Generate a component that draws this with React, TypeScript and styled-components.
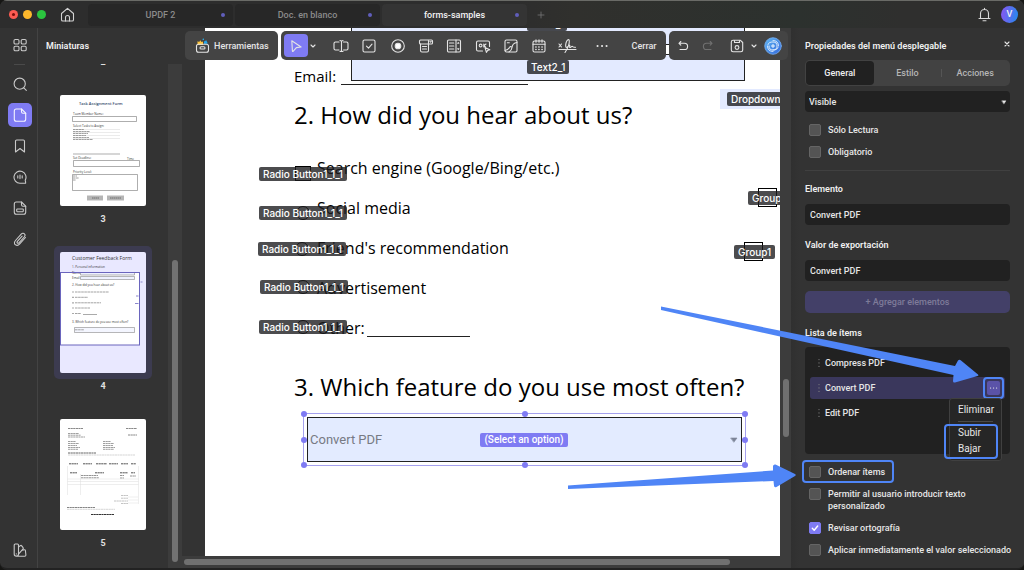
import React from 'react';
import styled, { createGlobalStyle, css } from 'styled-components';

const UI_FONT = `Roboto, 'Liberation Sans', sans-serif`;
const TAG_FONT = `Inter, 'Liberation Sans', sans-serif`;
const DOC_FONT = `'Open Sans', 'Noto Sans', sans-serif`;
const ACCENT = '#7f7bf3';
const MARKER = '#4f85f6';

const GlobalStyle = createGlobalStyle`
  *, *::before, *::after { box-sizing: border-box; }
  body { margin: 0; background: #161614; }
  button, input, select { font: inherit; color: inherit; margin: 0; padding: 0; border: 0; background: none; }
  button { cursor: pointer; }
  h1, h2, h3, p { margin: 0; font: inherit; }
  svg { display: block; flex: none; }
`;

const Window = styled.div`
  display: flex;
  flex-direction: column;
  height: 100vh;
  overflow: hidden;
  border-radius: 7px;
  border-bottom: 2px solid #222;
  background: #333;
  color: #e6e6e6;
  font: 500 9px/12px ${UI_FONT};
`;

/* ---------- icons ---------- */

const Icon = styled.svg.attrs({ 'aria-hidden': true })<{ $w?: number; $h?: number }>`
  width: ${p => p.$w ?? 16}px;
  height: ${p => p.$h ?? p.$w ?? 16}px;
  fill: none;
  stroke: currentColor;
  stroke-width: 1.1;
  stroke-linecap: round;
  stroke-linejoin: round;
`;

const ChevronDown = () => (
  <Icon $w={8} viewBox="0 0 8 8"><path d="M2 3l2 2 2-2" /></Icon>
);

/* ---------- tab bar ---------- */

const TitleBar = styled.header`
  display: flex;
  align-items: center;
  flex: none;
  height: 28px;
  padding: 1px 6px 0 9px;
  background: linear-gradient(90deg, #2d2d2d 0, #2d2d2d 50%, #30302d 56%, #2c312e 78%, #2f2f2e 88%);
  box-shadow: inset 0 1px 0 #6a6b67;
`;

const Lights = styled.div`
  display: flex;
  gap: 5px;
`;

const Light = styled.span<{ $color: string; $dot?: boolean }>`
  display: grid;
  place-items: center;
  width: 9px;
  height: 9px;
  border-radius: 50%;
  background: ${p => p.$color};
  ${p => p.$dot && css`
    &::after { content: ''; width: 3px; height: 3px; border-radius: 50%; background: #7a0f0c; }
  `}
`;

const HomeButton = styled.button`
  display: grid;
  place-items: center;
  width: 42px;
  height: 24px;
  color: #d2d2d2;
`;

const Tabs = styled.nav`
  display: flex;
  gap: 2px;
`;

const Tab = styled.button<{ $active?: boolean }>`
  display: grid;
  grid-template-columns: 12px 1fr 12px;
  align-items: center;
  width: 145px;
  height: 22px;
  border-radius: 4px;
  background: ${p => (p.$active ? '#343434' : '#272727')};
  color: ${p => (p.$active ? '#f2f2f2' : '#8b8b8b')};
`;

const UnsavedDot = styled.i`
  width: 4px;
  height: 4px;
  border-radius: 50%;
  background: #605ebb;
`;

const NewTab = styled.button`
  display: grid;
  place-items: center;
  width: 28px;
  height: 22px;
  color: #777;
`;

const TitleActions = styled.div`
  display: flex;
  align-items: center;
  gap: 10px;
  margin-left: auto;
  color: #d8d8d8;
`;

const IconButton = styled.button`
  display: grid;
  place-items: center;
`;

const Avatar = styled.button`
  width: 17px;
  height: 17px;
  border-radius: 50%;
  background: linear-gradient(100deg, #7d5cf0 15%, #2b86ee 90%);
  color: #f2f2f2;
  line-height: 17px;
`;

const Workspace = styled.div`
  display: flex;
  flex: 1;
  min-height: 0;
`;

/* ---------- left rail ---------- */

const Rail = styled.nav`
  display: flex;
  flex-direction: column;
  align-items: center;
  gap: 7px;
  flex: none;
  width: 38px;
  padding: 5px 0 6px 2px;
  border-right: 1px solid #434343;
`;

const RailButton = styled.button<{ $active?: boolean }>`
  display: grid;
  place-items: center;
  width: 24px;
  height: 24px;
  border-radius: 5px;
  background: ${p => (p.$active ? ACCENT : 'transparent')};
  color: ${p => (p.$active ? '#f4f4ff' : '#c9c9c9')};
  &:last-child { margin-top: auto; }
`;

const RailDivider = styled.hr`
  width: 11px;
  height: 1px;
  margin: 0;
  border: 0;
  background: #4a4a4a;
`;

/* ---------- thumbnails ---------- */

const Thumbnails = styled.aside`
  display: flex;
  flex-direction: column;
  flex: none;
  width: 144px;
`;

const ThumbTitle = styled.h2`
  height: 36px;
  padding: 12px 8px;
  font-weight: 600;
  color: #f0f0f0;
`;

const ThumbScroller = styled.div`
  display: flex;
  flex: 1;
  min-height: 0;
`;

const ThumbList = styled.div`
  display: flex;
  flex-direction: column;
  align-items: center;
  gap: 21px;
  flex: 1;
  overflow: hidden;
`;

const ThumbItem = styled.figure`
  display: flex;
  flex-direction: column;
  align-items: center;
  gap: 1px;
  margin: 0;
  &:first-child { margin-top: -8px; }
`;

const ThumbFrame = styled.button<{ $active?: boolean }>`
  padding: 6px;
  border-radius: 5px;
  background: ${p => (p.$active ? '#3c3b50' : 'transparent')};
`;

const ThumbSheet = styled.svg<{ $h: number; $tint?: boolean }>`
  width: 86px;
  height: ${p => p.$h}px;
  border-radius: 2px;
  background: ${p => (p.$tint ? '#e9e8ff' : '#fff')};
`;

const Caption = styled.figcaption`
  font-weight: 700;
  color: #e0e0e0;
`;

const Track = styled.div<{ $horizontal?: boolean }>`
  flex: none;
  display: flex;
  align-items: center;
  background: #3c3c3c;
  ${p => p.$horizontal
    ? css`height: 12px; padding-left: 2px;`
    : css`flex-direction: column;`}
`;

const ThumbTrack = styled(Track)`
  width: 14px;
`;

const ThumbHandle = styled.i`
  width: 6px;
  height: 60%;
  margin-top: 196px;
  border-radius: 3px;
  background: #727272;
`;

/* ---------- canvas ---------- */

const Canvas = styled.main`
  position: relative;
  display: flex;
  flex-direction: column;
  flex: 1;
  min-width: 0;
`;

const CanvasRow = styled.div`
  display: flex;
  flex: 1;
  min-height: 0;
  padding-left: 23px;
`;

const CanvasTrack = styled(Track)`
  width: 11px;
`;

const CanvasHandleY = styled.i`
  width: 6px;
  height: 58px;
  margin-top: 351px;
  border-radius: 3px;
  background: #707070;
`;

const CanvasHandleX = styled.i`
  width: 90%;
  height: 6px;
  border-radius: 3px;
  background: #707070;
`;

const Toolbar = styled.div`
  position: absolute;
  top: 3px;
  left: 3px;
  right: 3px;
  display: flex;
  gap: 3px;
  z-index: 1;
`;

const ToolGroup = styled.div<{ $grow?: boolean }>`
  display: flex;
  align-items: center;
  flex: ${p => (p.$grow ? '1' : 'none')};
  min-width: 0;
  height: 29px;
  border-radius: 5px;
  background: #444;
  color: #e4e4e4;
  padding-left: ${p => (p.$grow ? 3 : 0)}px;
`;

const ToolsMenu = styled.button`
  display: flex;
  align-items: center;
  gap: 4px;
  width: 93px;
  height: 28px;
  padding-left: 10px;
`;

const Tool = styled.button<{ $w?: number; $active?: boolean; $dim?: boolean }>`
  display: grid;
  place-items: center;
  flex: none;
  width: ${p => p.$w ?? 24}px;
  height: 23px;
  border-radius: 4px;
  background: ${p => (p.$active ? ACCENT : 'transparent')};
  color: ${p => (p.$dim ? '#707070' : 'inherit')};
`;

const FieldTools = styled.div`
  display: grid;
  grid-template-columns: repeat(9, 1fr);
  flex: 1;
  margin-left: 9px;
`;

const FieldTool = styled.button`
  display: grid;
  place-items: center;
  height: 23px;
`;

const SaveTools = styled.div`
  display: flex;
  align-items: center;
  margin-left: 8px;
  margin-right: 3px;
`;

/* ---------- document ---------- */

const Page = styled.article`
  position: relative;
  flex: 1;
  min-width: 0;
  overflow: hidden;
  background: #fff;
  color: #000;
  padding-left: 89px;
  font: 400 16px/40px ${DOC_FONT};
  white-space: nowrap;
`;

const EmailLine = styled.p`
  display: flex;
  align-items: flex-end;
  gap: 5px;
  height: 61px;
  padding-bottom: 3px;
  font-size: 15px;
  line-height: 20px;
`;

const Question = styled.h2`
  font-size: 24px;
  line-height: 32px;
  padding: 10px 0;
`;

const Answers = styled.div`
  padding: 7px 0 13px 23px;
`;

const Answer = styled.p`
  display: flex;
  gap: 2px;
`;

const Blank = styled.span<{ $w: number; $drop: number }>`
  width: ${p => p.$w}px;
  height: 1px;
  align-self: flex-end;
  margin-bottom: ${p => p.$drop}px;
  background: #222;
`;

const FormField = styled.span<{ $x: number; $y: number; $w: number; $h: number; $border?: boolean }>`
  position: absolute;
  left: ${p => p.$x}px;
  top: ${p => p.$y}px;
  width: ${p => p.$w}px;
  height: ${p => p.$h}px;
  background: #e3eaff;
  border: ${p => (p.$border ? '1px solid #222' : '0')};
`;

const Mark = styled.span<{ $x: number; $y: number; $round?: boolean; $w: number; $h: number }>`
  position: absolute;
  left: ${p => p.$x}px;
  top: ${p => p.$y}px;
  width: ${p => p.$w}px;
  height: ${p => p.$h}px;
  border: 1px solid #000;
  border-radius: ${p => (p.$round ? '50%' : '0')};
`;

const FieldTag = styled.span<{ $x: number; $y: number }>`
  position: absolute;
  left: ${p => p.$x}px;
  top: ${p => p.$y}px;
  padding: 0 4px;
  border-radius: 2px;
  background: rgba(28, 28, 30, 0.79);
  color: #fff;
  font: 500 10px/14px ${TAG_FONT};
`;

const Selection = styled.div`
  position: relative;
  width: 443px;
  margin-left: 9px;
  padding: 3px;
  border: 1px solid #a5a1ee;
`;

const Handle = styled.i<{ $h: 0 | 50 | 100; $v: 0 | 50 | 100 }>`
  position: absolute;
  left: ${p => p.$h}%;
  top: ${p => p.$v}%;
  width: 6px;
  height: 6px;
  margin: -3px;
  border-radius: 50%;
  background: ${ACCENT};
`;

const Dropdown = styled.div`
  display: grid;
  grid-template-columns: 1fr auto 1fr;
  align-items: center;
  height: 45px;
  padding: 0 3px 0 2px;
  border: 1px solid #222;
  background: #e3ebff;
  color: #777a84;
  font: 400 13px/20px ${UI_FONT};
  & > svg { justify-self: end; }
`;

const FieldName = styled.span`
  padding: 0 4px;
  border-radius: 2px;
  background: ${ACCENT};
  color: #fff;
  font: 500 10px/14px ${UI_FONT};
`;

/* ---------- properties panel ---------- */

const Panel = styled.aside`
  position: relative;
  z-index: 2;
  flex: none;
  width: 233px;
  padding: 0 14px;
  background: linear-gradient(90deg, #303030, #333 8px);
`;

const PanelHeader = styled.div`
  display: flex;
  justify-content: space-between;
  align-items: center;
  height: 32px;
  padding-top: 3px;
`;

const PanelTitle = styled.h2`
  font-weight: 600;
  color: #f0f0f0;
`;

const CloseButton = styled.button`
  padding: 0 0 4px;
  margin-right: -1px;
`;

const Segments = styled.div`
  display: grid;
  grid-template-columns: repeat(3, 1fr);
  height: 26px;
  padding: 1px;
  border-radius: 5px;
  background: #424242;
`;

const Segment = styled.button<{ $active?: boolean; $divided?: boolean }>`
  position: relative;
  border-radius: 4px;
  background: ${p => (p.$active ? '#212121' : 'transparent')};
  color: ${p => (p.$active ? '#f0f0f0' : '#b5b5b5')};
  ${p => p.$divided && css`
    &::before { content: ''; position: absolute; left: 0; top: 8px; bottom: 8px; width: 1px; background: #555; }
  `}
`;

const SelectWrap = styled.label`
  display: flex;
  align-items: center;
  margin: 5px 0 7px;
  padding-right: 3px;
  border-radius: 4px;
  background: #212121;
`;

const Select = styled.select`
  appearance: none;
  flex: 1;
  height: 21px;
  padding-left: 4px;
  outline: none;
`;

const CheckRow = styled.label`
  position: relative;
  display: flex;
  align-items: flex-start;
  gap: 7px;
  margin-right: -8px;
  padding: 5px 0 5px 4px;
`;

const CheckText = styled.span`
  padding-right: 6px;
`;

const Check = styled.input.attrs({ type: 'checkbox' })`
  appearance: none;
  flex: none;
  width: 12px;
  height: 12px;
  border-radius: 2px;
  border: 1px solid #656565;
  background: #545454;
  &:checked {
    border-color: ${ACCENT};
    background: ${ACCENT};
  }
`;

const Tick = styled(Icon)`
  position: absolute;
  left: 6px;
  top: 7px;
  color: #fff;
  stroke-width: 1.4;
`;

const PanelDivider = styled.hr`
  height: 1px;
  margin: 7px 0 10px;
  border: 0;
  background: #404040;
`;

const Label = styled.label`
  display: block;
  padding: 2px 0 9px;
  font-weight: 600;
  color: #f0f0f0;
`;

const TextInput = styled.input`
  width: 100%;
  height: 21px;
  margin-bottom: 12px;
  padding: 0 5px;
  border-radius: 4px;
  background: #212121;
`;

const AddButton = styled.button`
  width: 100%;
  height: 22px;
  margin: -2px 0 12px;
  border-radius: 5px;
  background: #434068;
  color: #7e7b99;
`;

const ItemList = styled.div`
  display: flex;
  flex-direction: column;
  gap: 3px;
  min-height: 107px;
  margin: -1px 0 7px;
  padding: 5px;
  border-radius: 4px;
  background: #212121;
`;

const Item = styled.div<{ $active?: boolean }>`
  position: relative;
  display: flex;
  align-items: center;
  gap: 4px;
  height: 22px;
  padding: 0 5px 0 7px;
  border-radius: 3px;
  background: ${p => (p.$active ? '#3a375c' : 'transparent')};
`;

const MoreButton = styled.button`
  position: relative;
  display: grid;
  place-items: center;
  width: 13px;
  height: 14px;
  margin-left: auto;
  border-radius: 2px;
  background: #5b53a8;
`;

const Menu = styled.div`
  position: absolute;
  top: 21px;
  right: 3px;
  width: 53px;
  padding: 3px 0;
  border: 1px solid #404040;
  border-radius: 3px;
  background: #262626;
  font-size: 10px;
  font-weight: 400;
`;

const MenuItem = styled.button`
  display: block;
  width: 100%;
  height: 16px;
  padding-left: 8px;
  text-align: left;
`;

const MenuDivider = styled.hr`
  height: 1px;
  margin: 3px 8px;
  border: 0;
  background: #4a4a4a;
`;

const MenuGroup = styled.div`
  position: relative;
`;

const Highlight = styled.span<{ $inset: string }>`
  position: absolute;
  inset: ${p => p.$inset};
  border: 2px solid ${MARKER};
  border-radius: 4px;
  pointer-events: none;
`;

const MenuArrow = styled.svg`
  position: absolute;
  top: -77px;
  right: 24px;
  width: 325px;
  height: 85px;
  fill: ${MARKER};
  pointer-events: none;
`;

const SortArrow = styled.svg`
  position: absolute;
  top: -1px;
  left: -240px;
  width: 235px;
  height: 30px;
  fill: ${MARKER};
  pointer-events: none;
`;

/* ---------- thumbnail drawings ---------- */

const Sheet3 = () => (
  <ThumbSheet $h={111} viewBox="0 0 86 111" fontFamily="Open Sans, sans-serif">
    <text x="19" y="10" fontSize="4" fontWeight="600" fill="#33486b">Task Assignment Form</text>
    <g fontSize="3" fill="#333">
      <text x="13" y="20">Team Member Name:</text>
      <text x="13" y="32">Select Tasks to Assign:</text>
      <text x="13" y="64">Set Deadline:</text>
      <text x="67" y="65">Time</text>
      <text x="13" y="78">Priority Level:</text>
    </g>
    <g stroke="#777" strokeWidth=".6" fill="none">
      <path d="M12.5 21.5h64v5h-64zM13.500 65.500h66v6h-66zM12.500 79.500h65v16h-65zM13 59h47" />
      <path d="M13 34.500h47M13 37.500h47M13 40.500h47M13 43.500h47" stroke="#ddd" />
    </g>
    <path d="M13 34.500h11M13 36.500h17M13 38.500h15M13 40.500h13M13 42.500h16M13 44.500h20M13 81h4M13 83h6M13 85h3" stroke="#888" strokeWidth=".8" strokeDasharray="2.400 .4" />
    <path d="M27 100.500h16v5H27zM47 100.500h17v5H47z" fill="#b5b5b5" />
    <path d="M32 103h7M50 103h11" stroke="#666" strokeWidth=".9" strokeDasharray="1.500 .4" />
  </ThumbSheet>
);

const Sheet4 = () => (
  <ThumbSheet $h={121} $tint viewBox="0 0 86 121" fontFamily="Open Sans, sans-serif">
    <text x="12" y="8" fontSize="5" fill="#333">Customer Feedback Form</text>
    <rect x="0" y="20" width="79.500" height="73" fill="#fff" />
    <g fontSize="3" fill="#333">
      <text x="12" y="16">1. Personal information</text>
      <text x="12" y="22">Name:</text>
      <text x="12" y="27">Email:</text>
      <text x="12" y="33.500">2. How did you hear about us?</text>
      <text x="12" y="71">3. Which feature do you use most often?</text>
    </g>
    <g stroke="#888" strokeWidth=".6" fill="#eef1ff">
      <path d="M20.500 20.500h54v2.500h-54zM20.500 24.500h54v3h-54z" />
      <path d="M14.500 75.500h60v5h-60z" fill="#f4f6ff" />
    </g>
    <path d="M15 40h34M15 45.300h13M15 50.800h26M15 56h15M15 61.500h6M15 77.800h9" stroke="#999" strokeWidth=".9" strokeDasharray="2.600 .5" />
    <path d="M12.500 40h1M12.500 45.300h1M12.500 50.800h1M12.500 56h1M12.500 61.500h1" stroke="#555" strokeWidth="1.200" />
    <path d="M23 62.500h14" stroke="#555" strokeWidth=".5" />
    <path d="M76 44h2.500M75 51.500h3.500M80.500 30h2" stroke="#8a86cc" strokeWidth="1.200" />
    <rect x=".5" y="20.500" width="79" height="72.500" fill="none" stroke="#6a65bd" />
  </ThumbSheet>
);

const Sheet5 = () => (
  <ThumbSheet $h={111} viewBox="0 0 86 111">
    <g stroke="#888" fill="none" strokeDasharray="2.200 .4">
      <path d="M8 9.500h15M66 9.500h11M68 16h9" strokeWidth="1" />
      <path d="M8 14.500h11M8 16.200h13M8 18h17M8 22.500h8M8 24.500h11M8 26.500h9M8 28.500h12M8 30.300h10M43 22.500h8M43 24.500h11M43 26.500h10M43 28.500h12M43 30.300h11" strokeWidth=".8" />
      <path d="M8 34h28" stroke="#555" strokeWidth=".9" />
      <path d="M8 36h67" stroke="#bbb" strokeWidth=".6" />
      <path d="M9 44.800h9M23 44.800h9M36 44.800h11M49 44.800h9M61 44.800h7M71 44.800h5M10 53.800h7M35 53.800h9M60 53.800h8M71 53.800h4" stroke="#555" strokeWidth="1" />
      <path d="M21 56.500h17M21 58.800h18M60 56.500h4M60 59h4M70 57h6" strokeWidth=".9" />
      <path d="M61 76.500h7M61 79.200h7M54 82h14M61 84.500h7" stroke="#aaa" strokeWidth=".7" />
      <path d="M7 88.500h28" stroke="#666" strokeWidth=".8" />
      <path d="M7 90.300h48" stroke="#bbb" strokeWidth=".6" />
      <path d="M31 95.500h23" stroke="#333" strokeWidth="1.100" />
    </g>
    <path d="M7.500 47v29M78.500 47v38M20.500 55v21M7.500 60h71M7.500 62.500h71M7.500 65.500h71M68 78h10M68 81h10M68 84h10" stroke="#ddd" strokeWidth=".5" fill="none" />
  </ThumbSheet>
);

const answers = ['Search engine (Google/Bing/etc.)', 'Social media', "Friend's recommendation", 'Advertisement', 'Other:'];

const radioMarks = [
  { x: 90, y: 138, w: 16, h: 15, round: false },
  { x: 91, y: 178, w: 14, h: 14, round: true },
  { x: 90, y: 214, w: 14, h: 14, round: true },
  { x: 91, y: 252, w: 14, h: 14, round: true },
  { x: 91, y: 292, w: 14, h: 14, round: true },
];

const radioTags = [
  { x: 54, y: 139 },
  { x: 54, y: 178 },
  { x: 53, y: 214 },
  { x: 55, y: 252 },
  { x: 54, y: 292 },
];

const Grip = () => (
  <Icon $w={4} $h={10} viewBox="0 0 4 10">
    <path d="M2 1.500v.1M2 4.900v.1M2 8.400v.1" stroke="#858585" />
  </Icon>
);

export default function App() {
  return (
    <>
      <GlobalStyle />
      <Window>
        <TitleBar>
          <Lights>
            <Light $color="#fc5b52" $dot />
            <Light $color="#fdb82c" />
            <Light $color="#2bc53f" />
          </Lights>
          <HomeButton aria-label="Inicio">
            <Icon $w={15} viewBox="0 0 15 15">
              <path d="M1.500 6.500L7.500 1.300l6 5.200v6.200q0 1.300-1.300 1.300H2.800q-1.300 0-1.300-1.300z" />
              <path d="M5.500 14v-3.500a2 2 0 014 0V14" />
            </Icon>
          </HomeButton>
          <Tabs>
            <Tab><span /><span>UPDF 2</span><UnsavedDot /></Tab>
            <Tab><span /><span>Doc. en blanco</span><UnsavedDot /></Tab>
            <Tab $active><span /><span>forms-samples</span><UnsavedDot /></Tab>
          </Tabs>
          <NewTab aria-label="Nueva pestaña">
            <Icon $w={8} viewBox="0 0 8 8"><path d="M4 1v6M1 4h6" strokeWidth=".8" /></Icon>
          </NewTab>
          <TitleActions>
            <IconButton aria-label="Notificaciones">
              <Icon $w={13} $h={15} viewBox="0 0 13 15">
                <path d="M2.500 11V6.500a4 4 0 018 0V11M1 11.500h11M5 13.700h3M6.500 2.500V1.200" />
              </Icon>
            </IconButton>
            <Avatar>V</Avatar>
          </TitleActions>
        </TitleBar>

        <Workspace>
          <Rail>
            <RailButton aria-label="Paneles">
              <Icon $w={14} viewBox="0 0 14 14">
                <rect x="1" y="1.500" width="5" height="4.500" rx="1.300" /><rect x="8.200" y="1.500" width="5" height="4.500" rx="1.300" />
                <rect x="1" y="8.200" width="5" height="4.500" rx="1.300" /><rect x="8.200" y="8.200" width="5" height="4.500" rx="1.300" />
              </Icon>
            </RailButton>
            <RailDivider />
            <RailButton aria-label="Buscar">
              <Icon $w={14} viewBox="0 0 14 14"><circle cx="6.700" cy="6.700" r="5.600" /><path d="M10.800 10.800l2.500 2.500" /></Icon>
            </RailButton>
            <RailButton $active aria-label="Miniaturas">
              <Icon $w={14} viewBox="0 0 14 14">
                <path d="M3.300 1h5.200l4.200 4.200v6q0 2-2 2H3.300q-2 0-2-2V3q0-2 2-2z" /><path d="M8.500 1v2.700q0 1.500 1.500 1.500h2.700" />
              </Icon>
            </RailButton>
            <RailButton aria-label="Marcadores">
              <Icon $w={14} viewBox="0 0 14 14"><path d="M2.500 13V2.200Q2.500 1 3.700 1h6.600q1.200 0 1.200 1.200V13L7 9.500z" /></Icon>
            </RailButton>
            <RailButton aria-label="Comentarios">
              <Icon $w={14} viewBox="0 0 14 14">
                <path d="M12.200 10.200A6 6 0 107 13.200h5.600v-1.400z" /><path d="M4.800 5.700v2.200M7 5v3.600M9.200 5.700v2.200" />
              </Icon>
            </RailButton>
            <RailButton aria-label="Documento">
              <Icon $w={14} viewBox="0 0 14 14">
                <path d="M3.300 1h5.200l4.200 4.200v6q0 2-2 2H3.300q-2 0-2-2V3q0-2 2-2z" /><path d="M8.500 1v2.700q0 1.500 1.500 1.500h2.700" /><rect x="3.700" y="8" width="6.600" height="2.700" rx=".6" />
              </Icon>
            </RailButton>
            <RailButton aria-label="Adjuntos">
              <Icon $w={14} viewBox="0 0 14 14">
                <path d="M12.500 5.500l-6 6.600c-1.400 1.500-3.300 1.600-4.300.6-1.100-1-1-2.800.3-4.200l5.700-6.300c1-1.100 2.400-1.200 3.200-.4.800.8.800 2.100-.2 3.200l-5.300 5.800c-.5.600-1.200.6-1.600.2-.4-.4-.4-1 .1-1.600l4.700-5.200" />
              </Icon>
            </RailButton>
            <RailButton aria-label="Temas">
              <Icon $w={14} viewBox="0 0 14 14">
                <path d="M1.200 2q0-1 1-1h2.300q1 0 1 1v9a2.100 2.100 0 01-4.300 0zM5.500 4.200l1.800-1.500q.8-.6 1.400.1l1.400 1.900q.5.800-.2 1.500l-4.400 5M9.500 7.200l1.800-.4q.9-.2 1.100.7l.5 4.500q0 1.200-1.200 1.200H3.400M3.300 10.800v.2" />
              </Icon>
            </RailButton>
          </Rail>

          <Thumbnails>
            <ThumbTitle>Miniaturas</ThumbTitle>
            <ThumbScroller>
              <ThumbList>
                <ThumbItem><Caption>2</Caption></ThumbItem>
                <ThumbItem><ThumbFrame aria-label="Página 3"><Sheet3 /></ThumbFrame><Caption>3</Caption></ThumbItem>
                <ThumbItem><ThumbFrame $active aria-label="Página 4"><Sheet4 /></ThumbFrame><Caption>4</Caption></ThumbItem>
                <ThumbItem><ThumbFrame aria-label="Página 5"><Sheet5 /></ThumbFrame><Caption>5</Caption></ThumbItem>
              </ThumbList>
              <ThumbTrack><ThumbHandle /></ThumbTrack>
            </ThumbScroller>
          </Thumbnails>

          <Canvas>
            <Toolbar>
              <ToolGroup>
                <ToolsMenu>
                  <Icon $w={15} viewBox="0 0 15 15">
                    <path d="M2.500 7V3.200l1.700.8 1-1.800L6.500 4 8 3.500V7z" fill="#ffc53a" stroke="none" />
                    <path d="M9 6V3.500l2.300-1.300 1.500 3.300z" fill="#25a5e8" stroke="none" />
                    <circle cx="8.300" cy="1.200" r=".8" fill="#2bb5f2" stroke="none" />
                    <rect x="1.500" y="6.300" width="12" height="8" rx="2" />
                    <rect x="5" y="8.800" width="5" height="2.200" rx="1.100" />
                  </Icon>
                  Herramientas
                </ToolsMenu>
              </ToolGroup>

              <ToolGroup $grow>
                <Tool $active aria-label="Seleccionar">
                  <Icon $w={14} viewBox="0 0 14 14"><path d="M2.800 1.800l9.300 6.200-4.700.6-3.100 3.600q-.8.800-.9-.3z" /></Icon>
                </Tool>
                <Tool $w={10} aria-label="Más selección"><ChevronDown /></Tool>
                <FieldTools>
                  <FieldTool aria-label="Campo de texto">
                    <Icon viewBox="0 0 16 16"><path d="M6 12H2.500Q1 12 1 10.500v-5Q1 4 2.500 4H6M10.500 4h3Q15 4 15 5.500v5q0 1.500-1.500 1.500h-3M8.500 3v10M7 2.500q1.500 0 1.500 1 0-1 1.500-1M7 13.500q1.500 0 1.500-1 0 1 1.500 1" /></Icon>
                  </FieldTool>
                  <FieldTool aria-label="Casilla">
                    <Icon viewBox="0 0 16 16"><rect x="2" y="2" width="12" height="12" rx="1.500" /><path d="M5.500 8.200l2 2 3.500-4" /></Icon>
                  </FieldTool>
                  <FieldTool aria-label="Botón de opción">
                    <Icon viewBox="0 0 16 16"><circle cx="8" cy="8" r="6.300" /><circle cx="8" cy="8" r="2.800" fill="#fff" /></Icon>
                  </FieldTool>
                  <FieldTool aria-label="Menú desplegable">
                    <Icon viewBox="0 0 16 16"><rect x="1.500" y="2" width="13" height="4" rx="1" /><path d="M10.500 2.500v3M12 3.500l.6.700.6-.7M2.500 6v6.500q0 1.500 1.500 1.500h5q1.500 0 1.500-1.500V6M4.500 8.500h4M4.500 11h4" /></Icon>
                  </FieldTool>
                  <FieldTool aria-label="Cuadro de lista">
                    <Icon viewBox="0 0 16 16"><rect x="1.500" y="2" width="13" height="12" rx="1.200" /><path d="M10 2v12M3.500 5h4.300M3.500 8h4.300M3.500 11h4.300M11.800 5.300l.5-.7.5.7M11.800 10.700l.5.700.5-.7" /></Icon>
                  </FieldTool>
                  <FieldTool aria-label="Botón">
                    <Icon viewBox="0 0 16 16"><path d="M7.500 13H3q-1.500 0-1.500-1.500v-7Q1.500 3 3 3h10q1.500 0 1.500 1.500v4" /><circle cx="5.600" cy="7.500" r="1.400" /><path d="M8.800 6v3M11 6L9 7.600l1.500 1.300M10 9.500l4.800 2.300-2.200.6-1.200 2z" /></Icon>
                  </FieldTool>
                  <FieldTool aria-label="Imagen">
                    <Icon viewBox="0 0 16 16"><rect x="2" y="2" width="12" height="12" rx="1.500" /><path d="M2 12.500q3-.5 4.500-3 .8-1.500 2-.6M14 4.500q-4.500.5-5 5-.3 3-3 4.500M4.300 4.800h2" /></Icon>
                  </FieldTool>
                  <FieldTool aria-label="Fecha">
                    <Icon viewBox="0 0 16 16"><rect x="2" y="3" width="12" height="11" rx="1.500" /><path d="M2 6.300h12M5 1.800v2.400M8 1.800v2.400M11 1.800v2.400" /><path d="M4.800 9h.3M7.800 9h.3M10.900 9h.3M4.800 11.500h.3M7.800 11.500h.3M10.900 11.500h.3" strokeWidth="1.400" /></Icon>
                  </FieldTool>
                  <FieldTool aria-label="Firma">
                    <Icon $w={19} $h={16} viewBox="0 0 19 16"><path d="M1 6l2.500 3M3.500 6L1 9M1 11.500h17M7 14.500c2-3 4.500-8 4.300-11.500C11.200.5 9 1.500 8 5c-.8 3.300-.3 5 1.200 4.200 1-.6 2-2.400 2.600-1.800.5.500-.8 2.200.2 2.100 1 0 1.300-1.300 2.200-1.300.7 0 .1 1.400 3.300 1" /></Icon>
                  </FieldTool>
                </FieldTools>
                <Tool $w={40} aria-label="Más">
                  <Icon $w={14} viewBox="0 0 14 14"><path d="M2.500 7h.1M7 7h.1M11.500 7h.1" strokeWidth="2" /></Icon>
                </Tool>
                <Tool $w={44}>Cerrar</Tool>
              </ToolGroup>

              <ToolGroup>
                <Tool $w={28} aria-label="Deshacer">
                  <Icon $w={12} viewBox="0 0 12 12"><path d="M3.800 1.500L2 3.300l1.800 1.800M2 3.300h5.500a2.700 2.700 0 010 6.200H3" /></Icon>
                </Tool>
                <Tool $w={22} $dim aria-label="Rehacer">
                  <Icon $w={12} viewBox="0 0 12 12"><path d="M8.200 1.500L10 3.300 8.200 5.100M10 3.300H4.500a2.700 2.700 0 000 6.200H9" /></Icon>
                </Tool>
                <SaveTools>
                  <Tool $w={20} aria-label="Guardar">
                    <Icon $w={14} viewBox="0 0 14 14"><path d="M3 1.300h7.500l2.200 2.200V11q0 1.700-1.700 1.700H3Q1.300 12.700 1.300 11V3Q1.300 1.300 3 1.300z" /><path d="M4.500 1.500v2h5v-2" /><circle cx="7" cy="8.500" r="1.900" /></Icon>
                  </Tool>
                  <Tool $w={14} aria-label="Más opciones de guardado"><ChevronDown /></Tool>
                  <Tool aria-label="Asistente de IA">
                    <Icon $w={18} viewBox="0 0 18 18">
                      <defs><linearGradient id="ai" x1="0" y1="0" x2="1" y2="1"><stop offset="0" stopColor="#62b8f2" /><stop offset="1" stopColor="#3266dc" /></linearGradient></defs>
                      <circle cx="9" cy="9" r="8.300" fill="url(#ai)" stroke="#77aef2" strokeWidth=".8" />
                      <path d="M9 3.500c3.500 0 5.500 2 5.500 5.500M9 14.500c-3.500 0-5.500-2-5.500-5.500M4 7.500C4.500 5.500 6.500 5 9 5c3 0 4 1.500 4 4s-1 4-4 4-4-1.500-4-4M14 10.500c-.5 2-2.500 2.500-5 2.500" stroke="#e6f2ff" strokeWidth=".9" />
                      <path d="M9 7.400v3.200M7.400 9h3.200" stroke="#fff" strokeWidth=".9" />
                    </Icon>
                  </Tool>
                </SaveTools>
              </ToolGroup>
            </Toolbar>

            <CanvasRow>
              <Page>
                <FormField $x={146} $y={-4} $w={394} $h={21} $border />
                <FormField $x={146} $y={26} $w={394} $h={27} $border />
                <FieldTag $x={322} $y={-11}>Text1_1</FieldTag>
                <FieldTag $x={322} $y={32}>Text2_1</FieldTag>
                <FormField $x={515} $y={61} $w={80} $h={20} />

                <EmailLine>Email: <Blank $w={187} $drop={1} /></EmailLine>
                <Question>2. How did you hear about us?</Question>
                <Answers>
                  {answers.map(text => (
                    <Answer key={text}>{text}{text === 'Other:' && <Blank $w={103} $drop={11} />}</Answer>
                  ))}
                </Answers>
                <Question>3. Which feature do you use most often?</Question>

                <Selection>
                  <Dropdown>
                    Convert PDF
                    <FieldName>(Select an option)</FieldName>
                    <Icon $w={8} $h={6} viewBox="0 0 8 6"><path d="M1 1h6L4 5z" fill="#7c8497" stroke="#7c8497" strokeWidth=".6" /></Icon>
                  </Dropdown>
                  <Handle $h={0} $v={0} /><Handle $h={50} $v={0} /><Handle $h={100} $v={0} />
                  <Handle $h={0} $v={50} /><Handle $h={100} $v={50} />
                  <Handle $h={0} $v={100} /><Handle $h={50} $v={100} /><Handle $h={100} $v={100} />
                </Selection>

                {radioMarks.map((m, i) => <Mark key={i} $x={m.x} $y={m.y} $w={m.w} $h={m.h} $round={m.round} />)}
                <Mark $x={553} $y={160} $w={19} $h={19} />
                <Mark $x={539} $y={214} $w={19} $h={19} />
                {radioTags.map((t, i) => <FieldTag key={i} $x={t.x} $y={t.y}>Radio Button1_1_1</FieldTag>)}
                <FieldTag $x={522} $y={64}>Dropdown1</FieldTag>
                <FieldTag $x={543} $y={163}>Group1</FieldTag>
                <FieldTag $x={529} $y={217}>Group1</FieldTag>
              </Page>
              <CanvasTrack><CanvasHandleY /></CanvasTrack>
            </CanvasRow>
            <Track $horizontal><CanvasHandleX /></Track>
          </Canvas>

          <Panel>
            <PanelHeader>
              <PanelTitle>Propiedades del menú desplegable</PanelTitle>
              <CloseButton aria-label="Cerrar panel">
                <Icon $w={8} viewBox="0 0 8 8"><path d="M2 2l4 4M6 2L2 6" /></Icon>
              </CloseButton>
            </PanelHeader>
            <Segments>
              <Segment $active>General</Segment>
              <Segment>Estilo</Segment>
              <Segment $divided>Acciones</Segment>
            </Segments>
            <SelectWrap>
              <Select aria-label="Visibilidad"><option>Visible</option></Select>
              <Icon $w={6} viewBox="0 0 6 6"><path d="M1 1.800h4L3 4.800z" fill="#eee" strokeWidth=".4" /></Icon>
            </SelectWrap>
            <CheckRow><Check /><CheckText>Sólo Lectura</CheckText></CheckRow>
            <CheckRow><Check /><CheckText>Obligatorio</CheckText></CheckRow>
            <PanelDivider />
            <Label htmlFor="item">Elemento</Label>
            <TextInput id="item" defaultValue="Convert PDF" />
            <Label htmlFor="export">Valor de exportación</Label>
            <TextInput id="export" defaultValue="Convert PDF" />
            <AddButton>+ Agregar elementos</AddButton>
            <Label as="h3">Lista de ítems</Label>
            <ItemList>
              <Item><Grip />Compress PDF</Item>
              <Item $active>
                <Grip />Convert PDF
                <MoreButton aria-label="Opciones del ítem">
                  <Icon $w={9} $h={4} viewBox="0 0 9 4"><path d="M1.500 2h.1M4.500 2h.1M7.500 2h.1" stroke="#eee" strokeWidth="1.200" /></Icon>
                  <Highlight $inset="-4px" />
                </MoreButton>
                <Menu>
                  <MenuItem>Eliminar</MenuItem>
                  <MenuDivider />
                  <MenuGroup>
                    <MenuItem>Subir</MenuItem>
                    <MenuItem>Bajar</MenuItem>
                    <Highlight $inset="-1px 3px -2px -6px" />
                  </MenuGroup>
                </Menu>
                <MenuArrow viewBox="0 0 325 85">
                  <path d="M5 6.500L299 66l3-5.500q1.500-1.500 3 0l17 14q1 1-.5 1.500L299 82.500q-2 .5-2-1.500l.5-6L5 10z" />
                </MenuArrow>
              </Item>
              <Item><Grip />Edit PDF</Item>
            </ItemList>
            <CheckRow>
              <Check /><CheckText>Ordenar ítems</CheckText>
              <Highlight $inset="-1px 124px 0 -3px" />
              <SortArrow viewBox="0 0 235 30">
                <path d="M3 25.500L208 10.500V6q.5-2 2.500-1.500L230 14q1.500 1 0 2l-18.500 11q-2.500 1-2.500-1.500L208.500 21 3 29z" />
              </SortArrow>
            </CheckRow>
            <CheckRow><Check /><CheckText>Permitir al usuario introducir texto personalizado</CheckText></CheckRow>
            <CheckRow>
              <Check defaultChecked /><CheckText>Revisar ortografía</CheckText>
              <Tick $w={8} viewBox="0 0 8 8"><path d="M1.300 4.300l1.900 2L6.700 2" /></Tick>
            </CheckRow>
            <CheckRow><Check /><CheckText>Aplicar inmediatamente el valor seleccionado</CheckText></CheckRow>
          </Panel>
        </Workspace>
      </Window>
    </>
  );
}
